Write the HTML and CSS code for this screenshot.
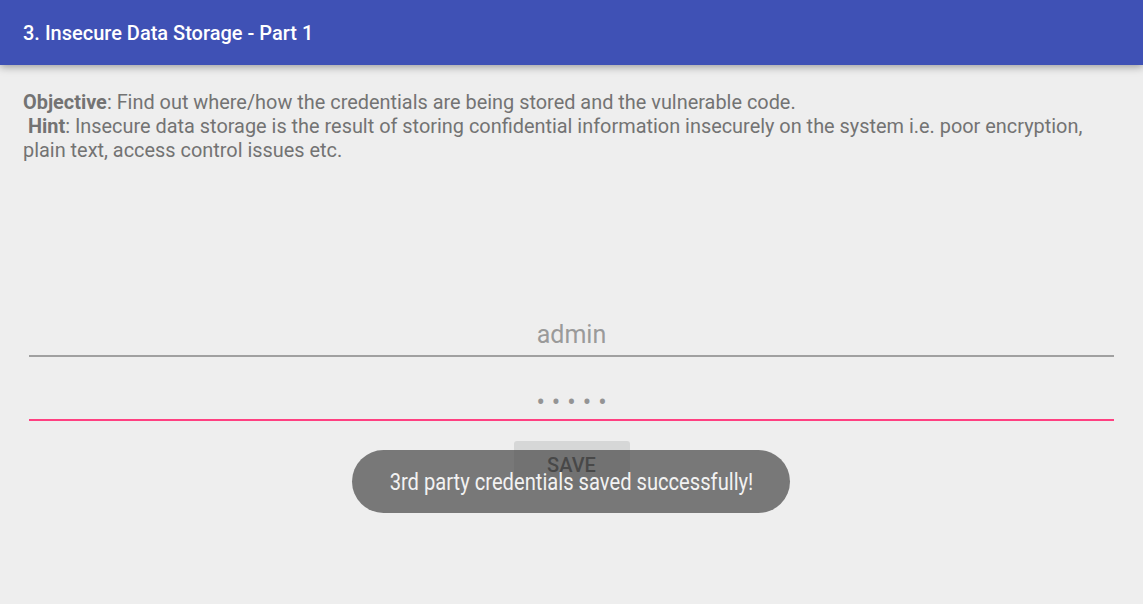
FILE: index.html
```html
<!DOCTYPE html>
<html>
<head>
<meta charset="utf-8">
<link rel="stylesheet" href="styles.css">
</head>
<body>
<header class="appbar">
  <h1 class="title">3. Insecure Data Storage - Part 1</h1>
</header>
<main class="content">
  <p class="desc"><b>Objective</b>: Find out where/how the credentials are being stored and the vulnerable code.<br>
  &nbsp;<b>Hint</b>: Insecure data storage is the result of storing confidential information insecurely on the system i.e. poor encryption, plain text, access control issues etc.</p>
  <div class="form">
    <div class="field">
      <span class="value">admin</span>
    </div>
    <div class="field focused">
      <span class="value dots">•••••</span>
    </div>
    <div class="actions">
      <button class="btn">SAVE</button>
    </div>
  </div>
</main>
<div class="toast"><span class="toast-text">3rd party credentials saved successfully!</span></div>
</body>
</html>
```
FILE: styles.css
```css
html, body {
  margin: 0;
  padding: 0;
  height: 100%;
}
body {
  background: #eeeeee;
  font-family: Roboto, "Noto Sans", sans-serif;
  position: relative;
  overflow: hidden;
}
.appbar {
  height: 65px;
  background: #3f51b5;
  display: flex;
  align-items: center;
  padding-left: 23px;
  box-shadow: 0 2px 8px rgba(0,0,0,0.35);
  position: relative;
  z-index: 1;
}
.title {
  margin: 0;
  color: #ffffff;
  font-size: 20px;
  font-weight: 500;
}
.content {
  padding: 26px 23px 0 23px;
}
.desc {
  margin: 0;
  font-size: 19.9px;
  line-height: 24px;
  color: #737373;
}
.desc b {
  font-weight: 700;
}
.form {
  margin-top: 130px;
  padding: 0 6px;
}
.field {
  height: 64px;
  border-bottom: 2px solid #a0a0a0;
  display: flex;
  justify-content: center;
  align-items: flex-end;
  box-sizing: border-box;
}
.field .value {
  font-size: 25px;
  color: #9a9a9a;
  padding-bottom: 6px;
  line-height: 28px;
}
.field.focused {
  border-bottom-color: #ff4081;
}
.dots {
  letter-spacing: 7px;
  margin-right: -7px;
  font-size: 25px;
  padding-bottom: 2px !important;
  color: #949494 !important;
}
.actions {
  display: flex;
  justify-content: center;
  padding-top: 20px;
}
.btn {
  width: 116px;
  height: 48px;
  border: none;
  border-radius: 3px;
  background: #d6d7d7;
  font-family: Roboto, sans-serif;
  font-weight: 500;
  font-size: 20px;
  color: #303030;
}
.toast {
  position: absolute;
  left: 352px;
  top: 450px;
  width: 438px;
  height: 63px;
  border-radius: 32px;
  background: rgba(80,80,80,0.75);
  display: flex;
  justify-content: center;
  align-items: center;
  z-index: 2;
}
.toast-text {
  display: inline-block;
  color: #f2f2f2;
  font-size: 24px;
  white-space: nowrap;
  transform: scaleX(0.84);
}
```
